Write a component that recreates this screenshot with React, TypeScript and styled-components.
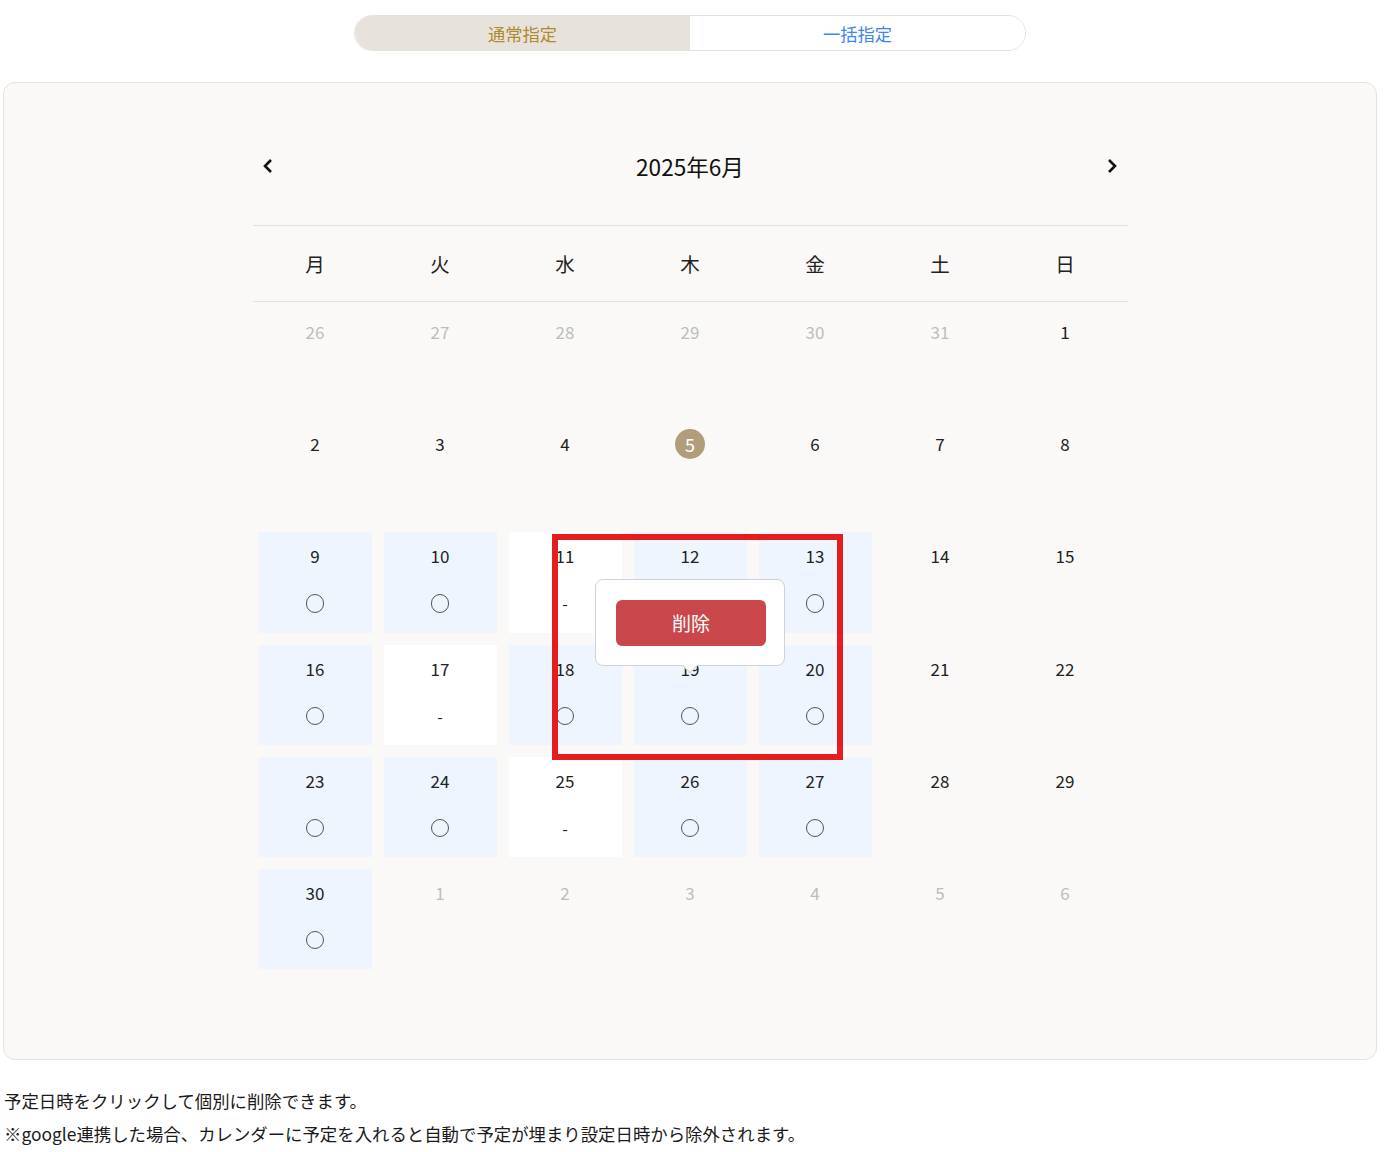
import styled, { createGlobalStyle } from "styled-components";

const Global = createGlobalStyle`
  body {
    margin: 0;
    background: #ffffff;
    font-family: "Noto Sans CJK JP", "Noto Sans", sans-serif;
    color: #222222;
  }
`

const Page = styled.div`
  padding: 15px 7px 0 3px;
`

const Tabs = styled.div`
  width: 672px;
  height: 36px;
  margin: 0 auto;
  display: flex;
  border: 1px solid #e6e3de;
  border-radius: 18px;
  overflow: hidden;
  box-sizing: border-box;
`

const Tab = styled.div<{ $active?: boolean }>`
  flex: 1;
  display: flex;
  align-items: center;
  justify-content: center;
  font-size: 17.3px;
  background: ${p => (p.$active ? "#e7e3dc" : "#ffffff")};
  color: ${p => (p.$active ? "#b08a2e" : "#3d86f0")};
`

const Panel = styled.div`
  margin-top: 31px;
  background: #faf9f7;
  border: 1px solid #e6e3de;
  border-radius: 12px;
  padding: 59px 0 84px;
`

const Calendar = styled.div`
  width: 875px;
  margin: 0 auto;
`

const Header = styled.div`
  height: 48px;
  display: flex;
  align-items: center;
  justify-content: space-between;
  margin-bottom: 35px;
`

const Arrow = styled.button`
  width: 30px;
  height: 30px;
  border: 0;
  background: none;
  padding: 0;
  display: flex;
  align-items: center;
  justify-content: center;
  cursor: pointer;
`

const Title = styled.div`
  font-size: 22.6px;
  color: #111111;
`

const Weekdays = styled.div`
  display: grid;
  grid-template-columns: repeat(7, 125px);
  height: 75px;
  border-top: 1px solid #e4e1dc;
  border-bottom: 1px solid #e4e1dc;
  align-items: center;
  justify-items: center;
  font-size: 19.5px;
  color: #222222;
`

const Grid = styled.div`
  position: relative;
  display: grid;
  grid-template-columns: repeat(7, 125px);
  grid-auto-rows: 112.2px;
`

const CellWrap = styled.div`
  padding: 6px;
`

const Cell = styled.div<{ $kind: "none" | "open" | "closed" }>`
  position: relative;
  height: 100%;
  box-sizing: border-box;
  padding-top: 12px;
  display: flex;
  flex-direction: column;
  align-items: center;
  background: ${p =>
    p.$kind === "open" ? "#eff5fe" : p.$kind === "closed" ? "#ffffff" : "transparent"};
`

const DateNum = styled.div<{ $muted?: boolean }>`
  height: 24px;
  line-height: 24px;
  font-size: 17px;
  color: ${p => (p.$muted ? "#bdbdbd" : "#222222")};
`

const Today = styled.div`
  width: 30px;
  height: 30px;
  margin-top: -3px;
  margin-bottom: -3px;
  border-radius: 50%;
  background: #b09e7a;
  color: #ffffff;
  font-size: 18px;
  display: flex;
  align-items: center;
  justify-content: center;
`

const Circle = styled.div`
  margin-top: 26px;
  width: 18.5px;
  height: 18.5px;
  border: 1.3px solid #555555;
  border-radius: 50%;
  box-sizing: border-box;
`

const Dash = styled.div`
  margin-top: 23px;
  font-size: 16px;
  line-height: 24px;
  color: #222222;
`

const Popup = styled.div`
  position: absolute;
  top: -66px;
  left: 50%;
  transform: translateX(-50%);
  width: 190px;
  height: 87px;
  box-sizing: border-box;
  padding: 20px;
  background: #ffffff;
  border: 1px solid #cfd2d8;
  border-radius: 8px;
  z-index: 2;
  &::after {
    content: "";
    position: absolute;
    left: 50%;
    bottom: -6px;
    width: 10px;
    height: 10px;
    background: #ffffff;
    border-right: 1px solid #cfd2d8;
    border-bottom: 1px solid #cfd2d8;
    transform: translateX(-50%) rotate(45deg);
  }
`

const DeleteButton = styled.button`
  width: 150px;
  height: 46px;
  border: 0;
  border-radius: 6px;
  background: #c9474a;
  color: #ffffff;
  font-family: "Noto Sans CJK JP", sans-serif;
  font-size: 19px;
  cursor: pointer;
`

const Highlight = styled.div`
  position: absolute;
  left: 299px;
  top: 232px;
  width: 291px;
  height: 226px;
  box-sizing: border-box;
  border: 6px solid #e41e20;
  z-index: 3;
  pointer-events: none;
`

const Notes = styled.div`
  margin-top: 24px;
  padding-left: 1px;
  font-size: 17.4px;
  line-height: 33px;
  color: #1a1a1a;
`

type Day = { d: number; muted?: boolean; kind?: "none" | "open" | "closed"; today?: boolean; popup?: boolean }

const open = (d: number, popup = false): Day => ({ d, kind: "open", popup })
const closed = (d: number): Day => ({ d, kind: "closed" })

const days: Day[] = [
  ...[26, 27, 28, 29, 30, 31].map(d => ({ d, muted: true })),
  { d: 1 },
  { d: 2 }, { d: 3 }, { d: 4 }, { d: 5, today: true }, { d: 6 }, { d: 7 }, { d: 8 },
  open(9), open(10), closed(11), open(12), open(13), { d: 14 }, { d: 15 },
  open(16), closed(17), open(18), open(19, true), open(20), { d: 21 }, { d: 22 },
  open(23), open(24), closed(25), open(26), open(27), { d: 28 }, { d: 29 },
  open(30),
  ...[1, 2, 3, 4, 5, 6].map(d => ({ d, muted: true })),
]

const weekdays = ["月", "火", "水", "木", "金", "土", "日"]

export default function App() {
  return <Page>
    <Global />
    <Tabs>
      <Tab $active>通常指定</Tab>
      <Tab>一括指定</Tab>
    </Tabs>
    <Panel>
      <Calendar>
        <Header>
          <Arrow>
            <svg width="14" height="16" viewBox="0 0 14 16"><path d="M10 2 L4 8 L10 14" fill="none" stroke="#111" strokeWidth="2.6" /></svg>
          </Arrow>
          <Title>2025年6月</Title>
          <Arrow>
            <svg width="14" height="16" viewBox="0 0 14 16"><path d="M4 2 L10 8 L4 14" fill="none" stroke="#111" strokeWidth="2.6" /></svg>
          </Arrow>
        </Header>
        <Weekdays>
          {weekdays.map(w => <div key={w}>{w}</div>)}
        </Weekdays>
        <Grid>
          {days.map((day, i) => (
            <CellWrap key={i}>
              <Cell $kind={day.kind ?? "none"}>
                {day.today
                  ? <Today>{day.d}</Today>
                  : <DateNum $muted={day.muted}>{day.d}</DateNum>}
                {day.kind === "open" && <Circle />}
                {day.kind === "closed" && <Dash>-</Dash>}
                {day.popup && <Popup><DeleteButton>削除</DeleteButton></Popup>}
              </Cell>
            </CellWrap>
          ))}
          <Highlight />
        </Grid>
      </Calendar>
    </Panel>
    <Notes>
      <div>予定日時をクリックして個別に削除できます。</div>
      <div>※google連携した場合、カレンダーに予定を入れると自動で予定が埋まり設定日時から除外されます。</div>
    </Notes>
  </Page>
}
